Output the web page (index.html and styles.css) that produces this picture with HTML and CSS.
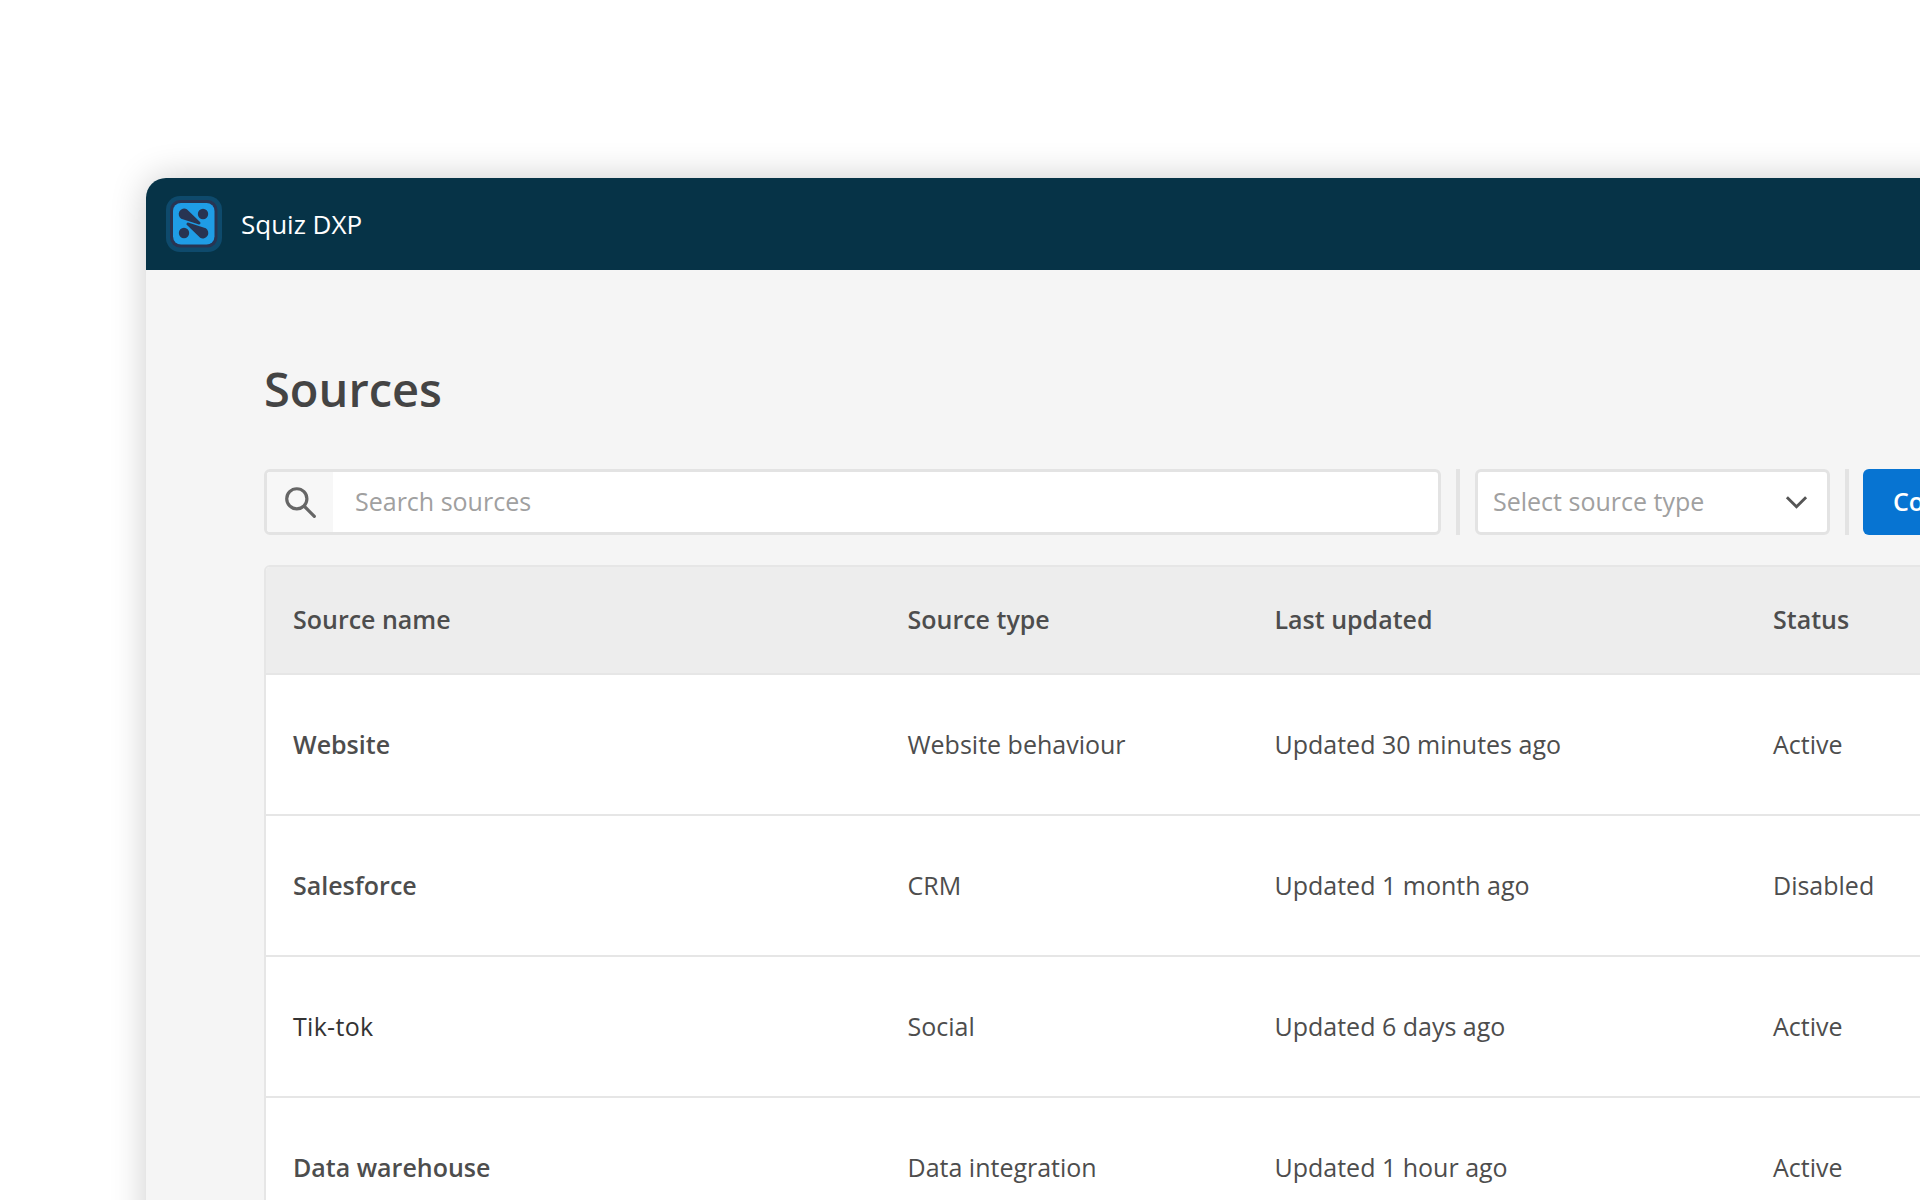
FILE: index.html
```html
<!DOCTYPE html>
<html lang="en">
<head>
<meta charset="utf-8">
<title>Squiz DXP - Sources</title>
<link rel="stylesheet" href="styles.css">
</head>
<body>
<div class="window">
  <header class="topbar">
    <svg class="logo" viewBox="0 0 56 56" aria-hidden="true">
      <rect width="56" height="56" rx="14" fill="#0e4a6c"/>
      <rect x="4" y="4" width="47.500" height="47.500" rx="10" fill="#283452"/>
      <rect x="7" y="7" width="41.500" height="41.500" rx="8" fill="#1f9de6"/>
      <g fill="#283452">
        <path d="M20.83 13.290L33.770 25.710A1.500 1.500 0 0 1 32.230 28.290L15.170 22.710A5.500 5.500 0 0 1 20.830 13.290Z"/>
        <path transform="rotate(180 27.500 27.500)" d="M20.83 13.290L33.770 25.710A1.500 1.500 0 0 1 32.230 28.290L15.170 22.710A5.500 5.500 0 0 1 20.830 13.290Z"/>
        <circle cx="37" cy="18" r="5.200"/>
        <circle cx="18" cy="37" r="5.200"/>
      </g>
    </svg>
    <span class="product">Squiz DXP</span>
  </header>
  <main class="content">
    <h1 class="title">Sources</h1>
    <div class="toolbar">
      <div class="search">
        <span class="search-icon">
          <svg viewBox="0 0 32 32" width="34" height="34" fill="none" stroke="#666" stroke-width="3" aria-hidden="true">
            <circle cx="13" cy="13" r="9.500"/>
            <path d="M20 20l9.500 9.500" stroke-linecap="round"/>
          </svg>
        </span>
        <span class="search-text">Search sources</span>
      </div>
      <span class="divider"></span>
      <div class="select">
        <span>Select source type</span>
        <svg viewBox="0 0 24 14" width="23" height="14" fill="none" stroke="#555" stroke-width="3" aria-hidden="true">
          <path d="M2 2l10 10 10-10"/>
        </svg>
      </div>
      <span class="divider"></span>
      <button class="button">Connect source</button>
    </div>
    <div class="table">
      <div class="row head"><span>Source name</span><span>Source type</span><span>Last updated</span><span>Status</span></div>
      <div class="row"><span class="name">Website</span><span>Website behaviour</span><span>Updated 30 minutes ago</span><span>Active</span></div>
      <div class="row"><span class="name">Salesforce</span><span>CRM</span><span>Updated 1 month ago</span><span>Disabled</span></div>
      <div class="row"><span class="name alt">Tik-tok</span><span>Social</span><span>Updated 6 days ago</span><span>Active</span></div>
      <div class="row"><span class="name">Data warehouse</span><span>Data integration</span><span>Updated 1 hour ago</span><span>Active</span></div>
    </div>
  </main>
</div>
</body>
</html>
```

FILE: styles.css
```css
* { box-sizing: border-box; }
html, body { margin: 0; height: 100%; overflow: hidden; background: #fff; }
body { padding: 178px 0 0 146px; font-family: "Open Sans", sans-serif; color: #4d4d4d; }
.window {
  width: 2000px;
  height: 1200px;
  background: #f5f5f5;
  border-radius: 20px 20px 0 0;
  box-shadow: 0 0 36px rgba(0, 0, 0, 0.2);
  overflow: hidden;
}
.topbar {
  height: 92px;
  background: #063347;
  display: flex;
  align-items: center;
  gap: 19px;
  padding-left: 20px;
}
.logo { width: 56px; height: 56px; flex: none; }
.product { color: #fff; font-size: 26px; }
.content { padding: 90px 0 0 118px; }
.title { margin: 0; font-size: 47px; line-height: 58px; font-weight: 600; color: #444; }
.toolbar { display: flex; height: 66px; margin-top: 51px; }
.search {
  width: 1177px;
  display: flex;
  background: #fff;
  border: 3px solid #e3e3e3;
  border-radius: 6px;
  overflow: hidden;
}
.search-icon {
  width: 66px;
  background: #f7f7f7;
  display: flex;
  align-items: center;
  justify-content: center;
  flex: none;
}
.search-text, .select span { font-size: 25px; color: #a0a0a0; margin-bottom: 3px; }
.search-text { align-self: center; margin-left: 22px; }
.divider { width: 4px; margin: 0 15px; background: #e3e3e3; flex: none; }
.select {
  width: 355px;
  padding: 0 19px 0 15px;
  display: flex;
  align-items: center;
  justify-content: space-between;
  background: #fff;
  border: 3px solid #e3e3e3;
  border-radius: 6px;
}
.button {
  width: 220px;
  margin-left: -1px;
  border: 0;
  border-radius: 6px;
  background: #0774d2;
  color: #fff;
  padding: 0 0 3px 30px;
  text-align: left;
  font: 600 25px "Open Sans", sans-serif;
}
.table {
  margin-top: 30px;
  background: #fff;
  border: 2px solid #e6e6e6;
  border-radius: 6px 0 0 0;
  overflow: hidden;
}
.row {
  height: 141px;
  padding: 0 0 2px 27px;
  display: grid;
  grid-template-columns: 614.500px 367px 498.500px 300px;
  align-items: center;
  font-size: 25px;
  border-bottom: 2px solid #e6e6e6;
}
.row.head { height: 108px; background: #ededed; font-weight: 600; }
.name { font-weight: 600; }
.name.alt { font-weight: 500; color: #333; letter-spacing: 0.3px; }
```
